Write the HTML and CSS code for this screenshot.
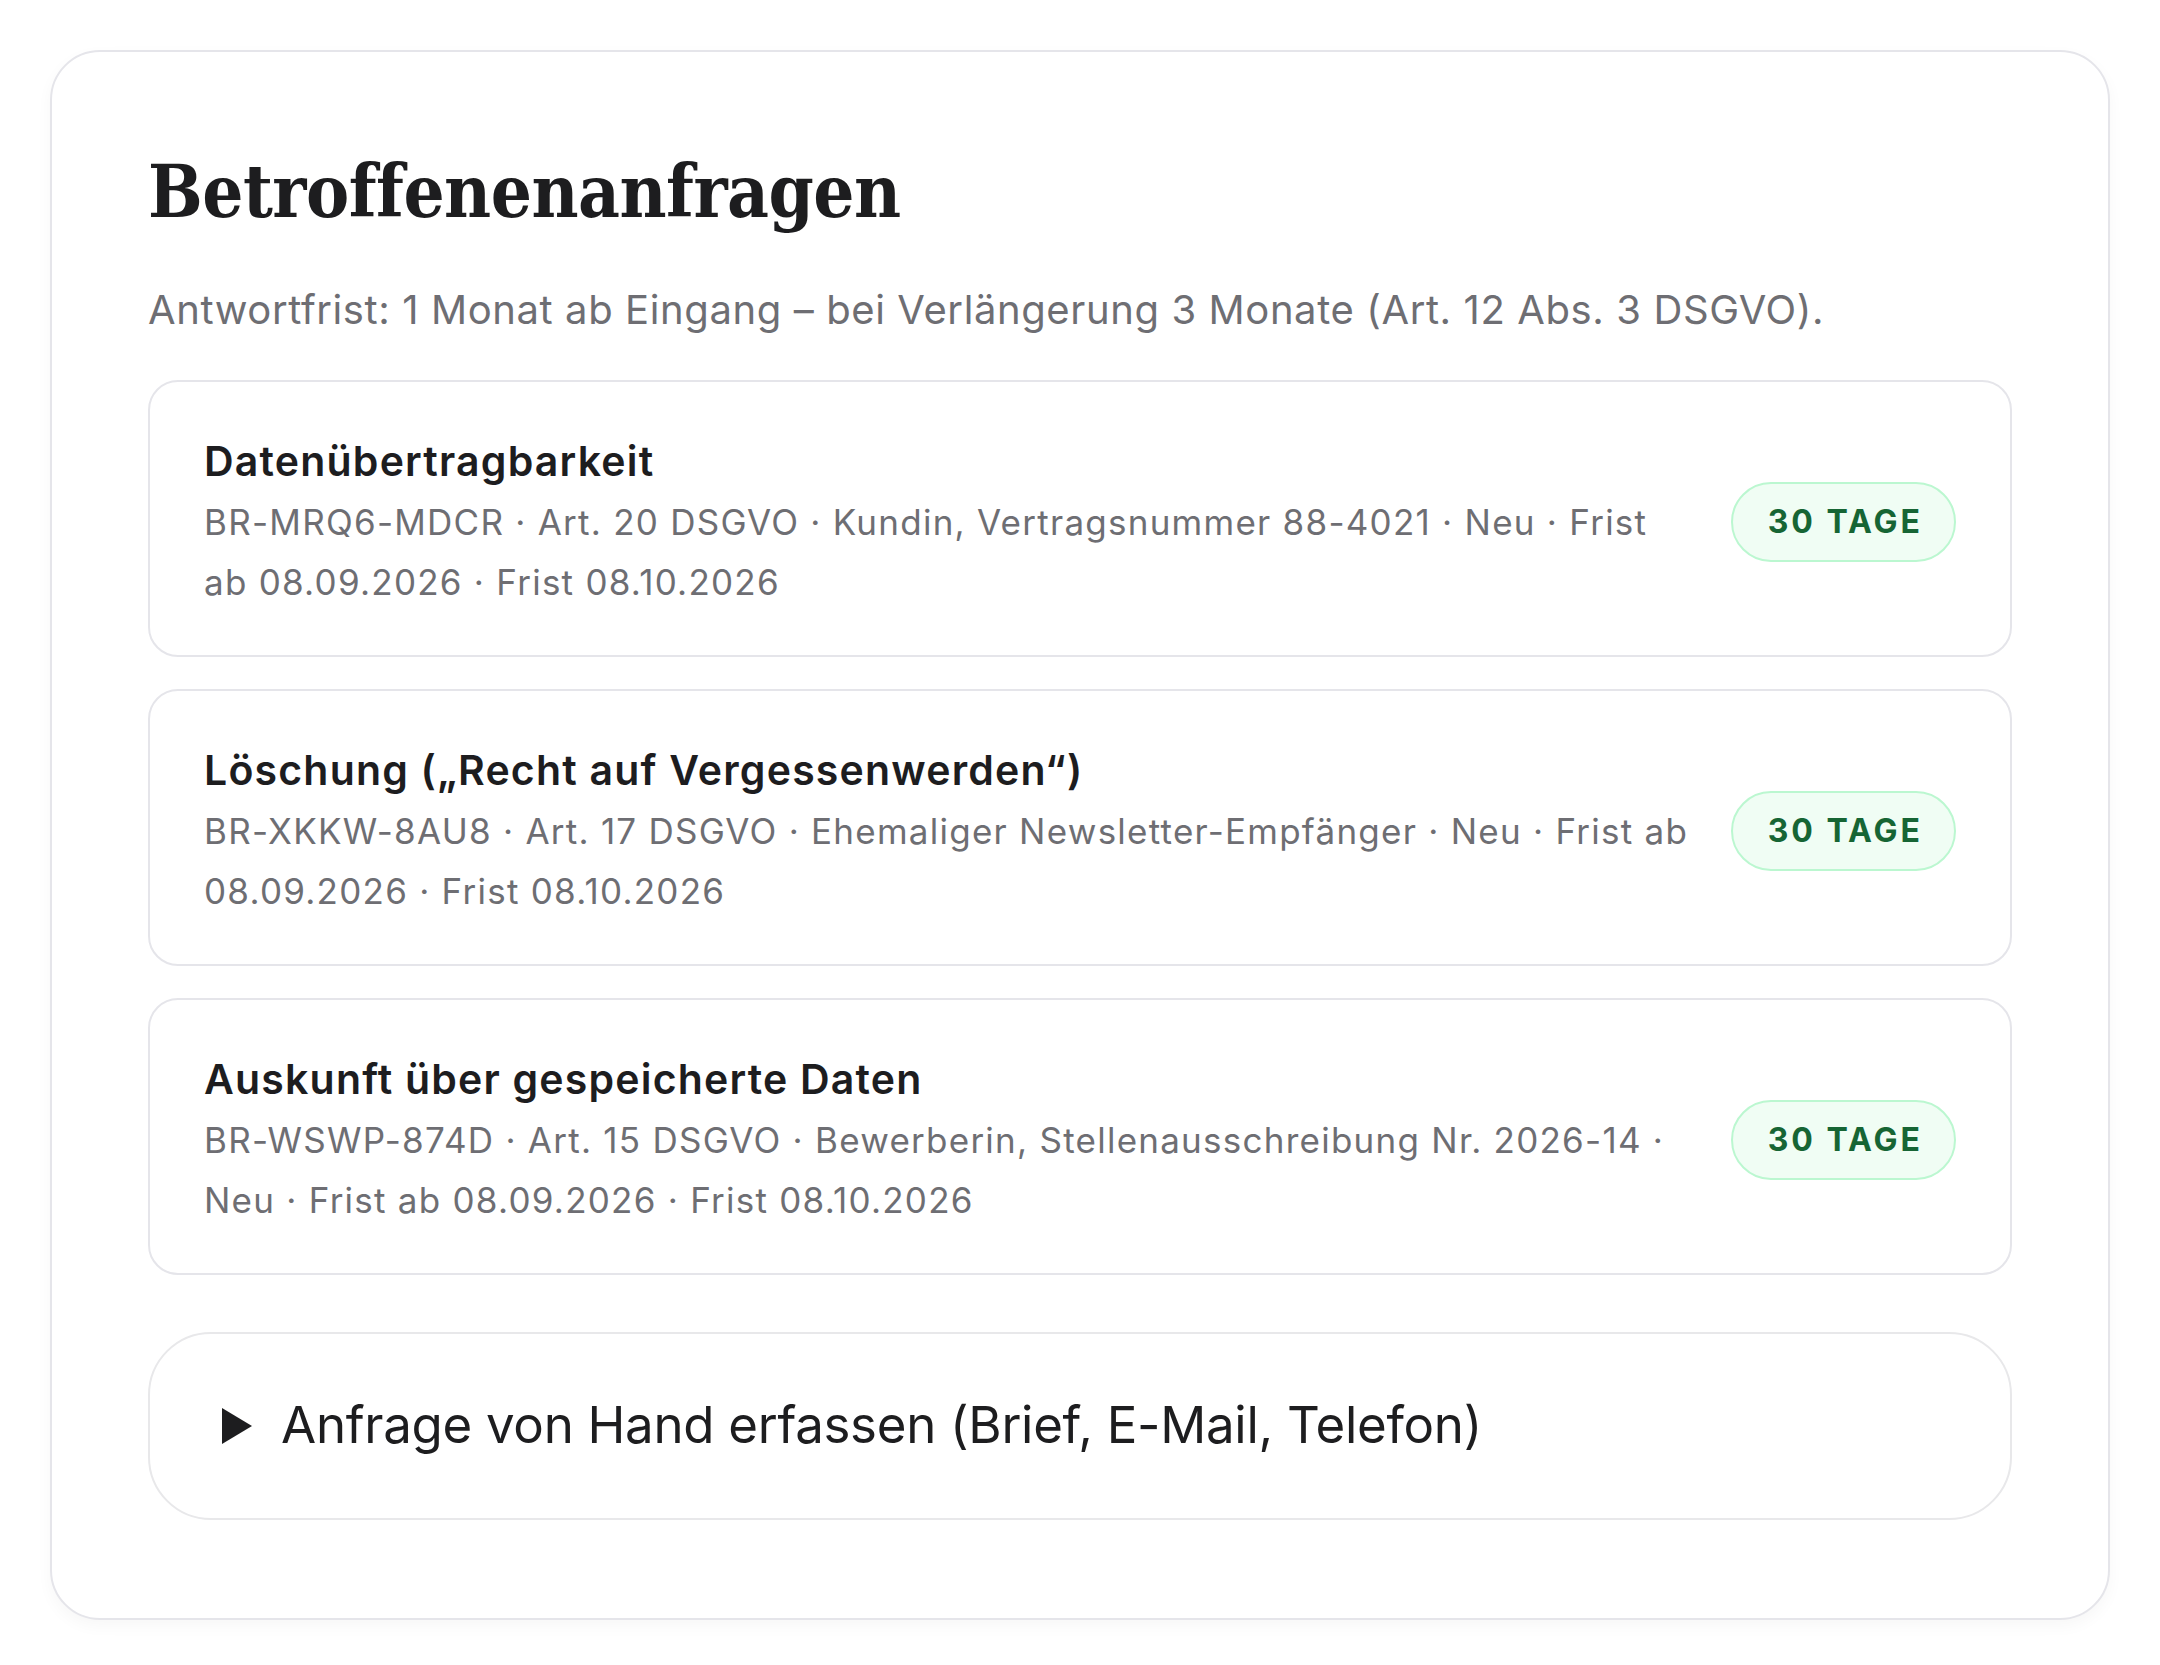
FILE: index.html
```html
<!DOCTYPE html>
<html lang="de">
<head>
<meta charset="utf-8">
<title>Betroffenenanfragen</title>
<link rel="stylesheet" href="styles.css">
</head>
<body>
<section class="panel">
  <h1 class="panel-title">Betroffenenanfragen</h1>
  <p class="panel-lead">Antwortfrist: 1 Monat ab Eingang – bei Verlängerung 3 Monate (Art. 12 Abs. 3 DSGVO).</p>

  <ul class="requests">
    <li class="request">
      <div class="request-body">
        <div class="request-title">Datenübertragbarkeit</div>
        <div class="request-meta">BR-MRQ6-MDCR · Art. 20 DSGVO · Kundin, Vertragsnummer 88-4021 · Neu · Frist ab 08.09.2026 · Frist 08.10.2026</div>
      </div>
      <span class="badge">30 Tage</span>
    </li>
    <li class="request">
      <div class="request-body">
        <div class="request-title">Löschung („Recht auf Vergessenwerden“)</div>
        <div class="request-meta">BR-XKKW-8AU8 · Art. 17 DSGVO · Ehemaliger Newsletter-Empfänger · Neu · Frist ab 08.09.2026 · Frist 08.10.2026</div>
      </div>
      <span class="badge">30 Tage</span>
    </li>
    <li class="request">
      <div class="request-body">
        <div class="request-title">Auskunft über gespeicherte Daten</div>
        <div class="request-meta">BR-WSWP-874D · Art. 15 DSGVO · Bewerberin, Stellenausschreibung Nr. 2026-14 · Neu · Frist ab 08.09.2026 · Frist 08.10.2026</div>
      </div>
      <span class="badge">30 Tage</span>
    </li>
  </ul>

  <details class="manual">
    <summary class="manual-summary">Anfrage von Hand erfassen (Brief, E-Mail, Telefon)</summary>
  </details>
</section>
</body>
</html>
```

FILE: styles.css
```css
* {
  box-sizing: border-box;
}

html,
body {
  margin: 0;
  padding: 0;
  background: #ffffff;
}

body {
  font-family: Inter, "Noto Sans", "Liberation Sans", sans-serif;
  color: #1d1d1f;
}

/* outer card */
.panel {
  margin: 50px;
  padding: 97px 96px 98px;
  border: 2px solid #e5e5ea;
  border-radius: 50px;
  background: #ffffff;
  box-shadow: 0 6px 16px rgba(20, 20, 40, 0.035);
}

.panel-title {
  margin: 0;
  font-family: "DejaVu Serif Condensed", "DejaVu Serif", "Liberation Serif", serif;
  font-stretch: semi-condensed;
  font-weight: 700;
  font-size: 72px;
  line-height: 86px;
  letter-spacing: -0.5px;
  color: #1d1d1f;
}

.panel-lead {
  margin: 45px 0 40px;
  font-size: 40px;
  line-height: 60px;
  letter-spacing: 0.6px;
  color: #6e6e73;
}

/* request list */
.requests {
  list-style: none;
  margin: 0;
  padding: 0;
  display: flex;
  flex-direction: column;
  gap: 32px;
}

.request {
  display: flex;
  align-items: center;
  gap: 42px;
  padding: 48px 54px 42px;
  border: 2px solid #e5e5ea;
  border-radius: 30px;
  min-height: 277px;
}

.request-body {
  flex: 1;
  min-width: 0;
}

.request-title {
  font-size: 41px;
  line-height: 60px;
  font-weight: 600;
  letter-spacing: 1.2px;
  color: #1d1d1f;
}

.request-meta {
  margin-top: 1px;
  font-size: 35px;
  line-height: 60px;
  letter-spacing: 1.25px;
  color: #6e6e73;
}

.badge {
  flex: none;
  display: inline-flex;
  align-items: center;
  height: 80px;
  padding: 0 31px 0 35px;
  border: 2px solid #bbf7d0;
  border-radius: 40px;
  background: #f0fdf4;
  color: #166534;
  font-size: 32px;
  font-weight: 700;
  letter-spacing: 3px;
  text-transform: uppercase;
}

/* manual entry disclosure */
.manual {
  margin-top: 57px;
  border: 2px solid #e8e8ea;
  border-radius: 63px;
}

.manual-summary {
  display: flex;
  align-items: center;
  gap: 29px;
  padding: 59px 72px 62px;
  list-style: none;
  cursor: pointer;
  font-size: 51px;
  line-height: 63px;
  letter-spacing: -0.3px;
  color: #1d1d1f;
}

.manual-summary::-webkit-details-marker {
  display: none;
}

.manual-summary::before {
  content: "";
  flex: none;
  width: 0;
  height: 0;
  border-left: 30px solid #1d1d1f;
  border-top: 18px solid transparent;
  border-bottom: 18px solid transparent;
  margin-top: 2px;
}
```
